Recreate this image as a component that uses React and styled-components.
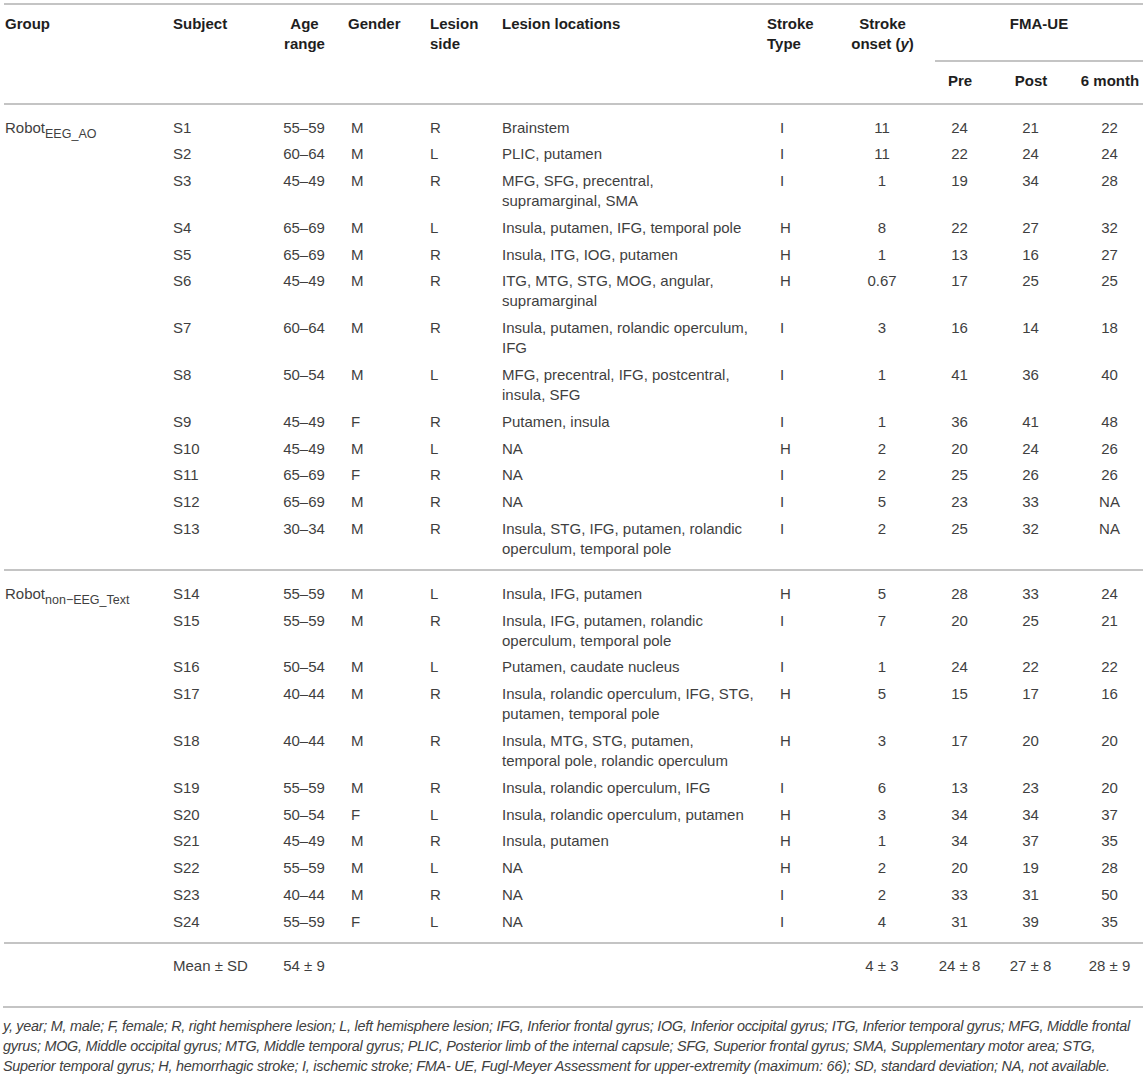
import React from 'react';
import styled, { createGlobalStyle, css } from 'styled-components';

const GlobalStyle = createGlobalStyle`
  body {
    margin: 0;
    background: #ffffff;
    font-family: 'Liberation Sans', Arial, sans-serif;
  }
`;

const Page = styled.div`
  padding: 3px 3px 0 3px;
  color: #3f3f3f;
`;

const Table = styled.table`
  width: 1139px;
  margin-left: 1px;
  border-collapse: collapse;
  table-layout: fixed;
  border-top: 2px solid #c4c4c4;
  font-size: 15px;
  line-height: 20px;
`;

const HeadRow = styled.tr`
  height: ${(p) => p.$h}px;
`;

const Th = styled.th`
  vertical-align: top;
  text-align: ${(p) => p.$align || 'left'};
  padding: 9px 0 0 ${(p) => p.$pl || 0}px;
  font-weight: bold;
  color: #1e1e1e;
  ${(p) =>
    p.$rule &&
    css`
      border-bottom: 2px solid #c4c4c4;
    `}
`;

const Group = styled.tbody`
  border-top: 2px solid #c4c4c4;
`;

const Row = styled.tr`
  td {
    padding-top: 3.4px;
    padding-bottom: 3.4px;
  }
  ${(p) =>
    p.$first &&
    css`
      td {
        padding-top: 12.5px;
      }
    `}
  ${(p) =>
    p.$last &&
    css`
      td {
        padding-bottom: 10.5px;
      }
    `}
`;

const Td = styled.td`
  vertical-align: top;
  text-align: ${(p) => p.$align || 'left'};
  padding-left: ${(p) => p.$pl || 0}px;
  white-space: pre-line;
`;

const MeanRow = styled.tr`
  td {
    padding-top: 12px;
    padding-bottom: 30px;
  }
`;

const Sub = styled.sub`
  font-size: 12.5px;
  vertical-align: -5px;
  line-height: 0;
`;

const Notes = styled.p`
  margin: 0;
  padding: 8px 0 0 0;
  border-top: 2px solid #c4c4c4;
  width: 1140px;
  font-size: 14.4px;
  letter-spacing: -0.25px;
  line-height: 20px;
  font-style: italic;
  color: #404040;
`;

const cols = [168, 110, 45, 101, 72, 264, 66, 105, 50, 92, 66];

const groupA = [
  ['S1', '55–59', 'M', 'R', 'Brainstem', 'I', '11', '24', '21', '22'],
  ['S2', '60–64', 'M', 'L', 'PLIC, putamen', 'I', '11', '22', '24', '24'],
  ['S3', '45–49', 'M', 'R', 'MFG, SFG, precentral,\nsupramarginal, SMA', 'I', '1', '19', '34', '28'],
  ['S4', '65–69', 'M', 'L', 'Insula, putamen, IFG, temporal pole', 'H', '8', '22', '27', '32'],
  ['S5', '65–69', 'M', 'R', 'Insula, ITG, IOG, putamen', 'H', '1', '13', '16', '27'],
  ['S6', '45–49', 'M', 'R', 'ITG, MTG, STG, MOG, angular,\nsupramarginal', 'H', '0.67', '17', '25', '25'],
  ['S7', '60–64', 'M', 'R', 'Insula, putamen, rolandic operculum,\nIFG', 'I', '3', '16', '14', '18'],
  ['S8', '50–54', 'M', 'L', 'MFG, precentral, IFG, postcentral,\ninsula, SFG', 'I', '1', '41', '36', '40'],
  ['S9', '45–49', 'F', 'R', 'Putamen, insula', 'I', '1', '36', '41', '48'],
  ['S10', '45–49', 'M', 'L', 'NA', 'H', '2', '20', '24', '26'],
  ['S11', '65–69', 'F', 'R', 'NA', 'I', '2', '25', '26', '26'],
  ['S12', '65–69', 'M', 'R', 'NA', 'I', '5', '23', '33', 'NA'],
  ['S13', '30–34', 'M', 'R', 'Insula, STG, IFG, putamen, rolandic\noperculum, temporal pole', 'I', '2', '25', '32', 'NA'],
];

const groupB = [
  ['S14', '55–59', 'M', 'L', 'Insula, IFG, putamen', 'H', '5', '28', '33', '24'],
  ['S15', '55–59', 'M', 'R', 'Insula, IFG, putamen, rolandic\noperculum, temporal pole', 'I', '7', '20', '25', '21'],
  ['S16', '50–54', 'M', 'L', 'Putamen, caudate nucleus', 'I', '1', '24', '22', '22'],
  ['S17', '40–44', 'M', 'R', 'Insula, rolandic operculum, IFG, STG,\nputamen, temporal pole', 'H', '5', '15', '17', '16'],
  ['S18', '40–44', 'M', 'R', 'Insula, MTG, STG, putamen,\ntemporal pole, rolandic operculum', 'H', '3', '17', '20', '20'],
  ['S19', '55–59', 'M', 'R', 'Insula, rolandic operculum, IFG', 'I', '6', '13', '23', '20'],
  ['S20', '50–54', 'F', 'L', 'Insula, rolandic operculum, putamen', 'H', '3', '34', '34', '37'],
  ['S21', '45–49', 'M', 'R', 'Insula, putamen', 'H', '1', '34', '37', '35'],
  ['S22', '55–59', 'M', 'L', 'NA', 'H', '2', '20', '19', '28'],
  ['S23', '40–44', 'M', 'R', 'NA', 'I', '2', '33', '31', '50'],
  ['S24', '55–59', 'F', 'L', 'NA', 'I', '4', '31', '39', '35'],
];

const SubjectRows = ({ rows, label }) =>
  rows.map((r, i) => (
    <Row key={r[0]} $first={i === 0} $last={i === rows.length - 1}>
      <Td $pl={1}>{i === 0 ? label : null}</Td>
      <Td $pl={1}>{r[0]}</Td>
      <Td $align="center">{r[1]}</Td>
      <Td $pl={24}>{r[2]}</Td>
      <Td $pl={2}>{r[3]}</Td>
      <Td $pl={2}>{r[4]}</Td>
      <Td $pl={16}>{r[5]}</Td>
      <Td $align="center">{r[6]}</Td>
      <Td $align="center">{r[7]}</Td>
      <Td $align="center">{r[8]}</Td>
      <Td $align="center">{r[9]}</Td>
    </Row>
  ));

export default function App() {
  return (
    <Page>
      <GlobalStyle />
      <Table>
        <colgroup>
          {cols.map((w, i) => (
            <col key={i} style={{ width: w }} />
          ))}
        </colgroup>
        <thead>
          <HeadRow $h={57}>
            <Th rowSpan={2} $pl={1}>Group</Th>
            <Th rowSpan={2} $pl={1}>Subject</Th>
            <Th rowSpan={2} $align="center">Age range</Th>
            <Th rowSpan={2} $pl={21}>Gender</Th>
            <Th rowSpan={2} $pl={2}>Lesion side</Th>
            <Th rowSpan={2} $pl={2}>Lesion locations</Th>
            <Th rowSpan={2} $pl={3}>Stroke Type</Th>
            <Th rowSpan={2} $align="center">
              Stroke
              <br />
              onset (<i>y</i>)
            </Th>
            <Th colSpan={3} $align="center" $rule>
              FMA-UE
            </Th>
          </HeadRow>
          <HeadRow $h={43}>
            <Th $align="center">Pre</Th>
            <Th $align="center">Post</Th>
            <Th $align="center">6 month</Th>
          </HeadRow>
        </thead>
        <Group>
          <SubjectRows
            rows={groupA}
            label={
              <>
                Robot<Sub>EEG_AO</Sub>
              </>
            }
          />
        </Group>
        <Group>
          <SubjectRows
            rows={groupB}
            label={
              <>
                Robot<Sub>non−EEG_Text</Sub>
              </>
            }
          />
        </Group>
        <Group>
          <MeanRow>
            <Td />
            <Td $pl={1}>Mean ± SD</Td>
            <Td $align="center">54 ± 9</Td>
            <Td />
            <Td />
            <Td />
            <Td />
            <Td $align="center">4 ± 3</Td>
            <Td $align="center">24 ± 8</Td>
            <Td $align="center">27 ± 8</Td>
            <Td $align="center">28 ± 9</Td>
          </MeanRow>
        </Group>
      </Table>
      <Notes>
        y, year; M, male; F, female; R, right hemisphere lesion; L, left hemisphere lesion; IFG, Inferior
        frontal gyrus; IOG, Inferior occipital gyrus; ITG, Inferior temporal gyrus; MFG, Middle frontal gyrus;
        MOG, Middle occipital gyrus; MTG, Middle temporal gyrus; PLIC, Posterior limb of the internal capsule;
        SFG, Superior frontal gyrus; SMA, Supplementary motor area; STG, Superior temporal gyrus; H,
        hemorrhagic stroke; I, ischemic stroke; FMA- UE, Fugl-Meyer Assessment for upper-extremity (maximum:
        66); SD, standard deviation; NA, not available.
      </Notes>
    </Page>
  );
}
